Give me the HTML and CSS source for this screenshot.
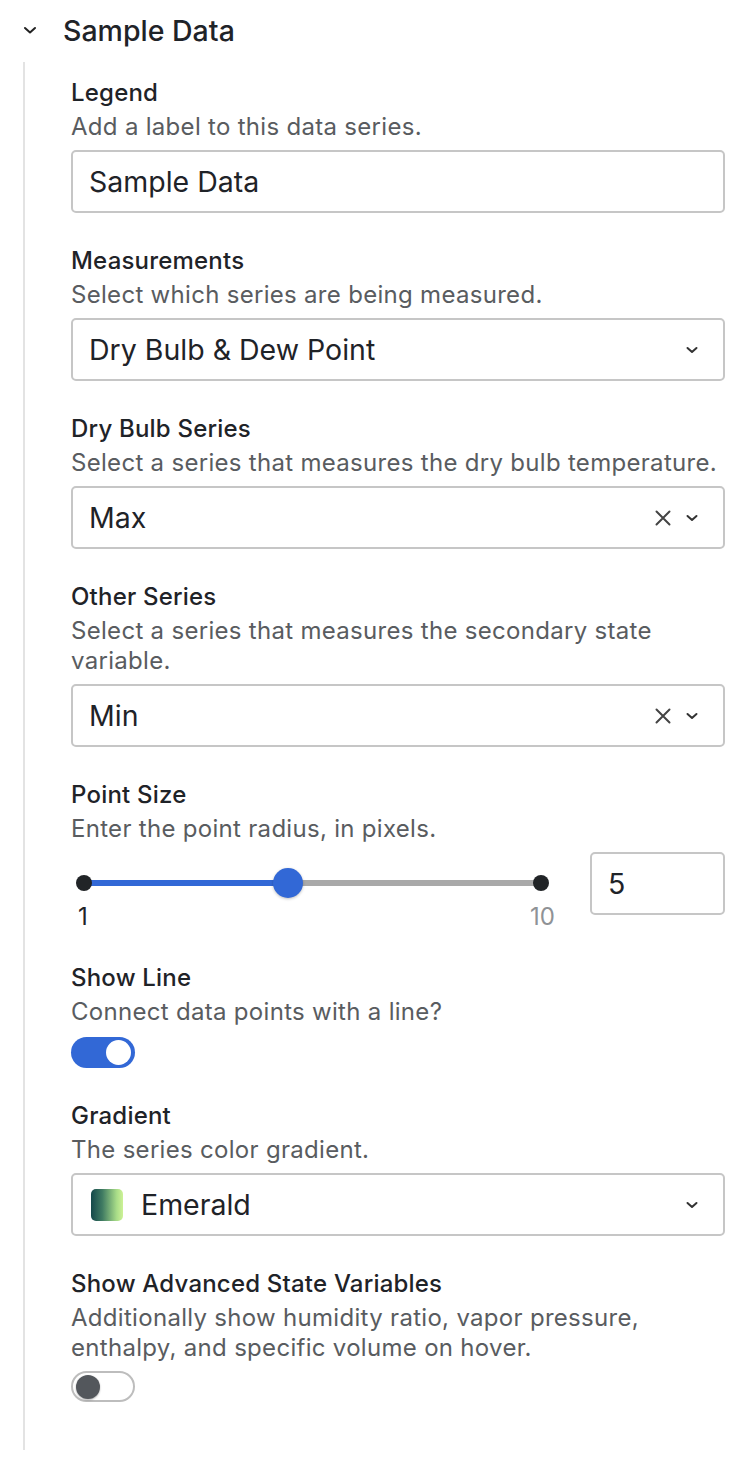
FILE: index.html
```html
<!DOCTYPE html>
<html>
<head>
<meta charset="utf-8">
<link rel="stylesheet" href="styles.css">
</head>
<body>
<div class="panel">
  <div class="header">
    <svg class="chev-head" width="14" height="10" viewBox="0 0 14 10"><path d="M2 3 L7 7.5 L12 3" fill="none" stroke="#222" stroke-width="2" stroke-linecap="round" stroke-linejoin="round"/></svg>
    <span class="title">Sample Data</span>
  </div>
  <div class="body">
    <div class="field">
      <div class="label">Legend</div>
      <div class="desc">Add a label to this data series.</div>
      <div class="input">Sample Data</div>
    </div>
    <div class="field">
      <div class="label">Measurements</div>
      <div class="desc">Select which series are being measured.</div>
      <div class="input select">
        <span class="val">Dry Bulb &amp; Dew Point</span>
        <svg class="chev" width="14" height="10" viewBox="0 0 14 10"><path d="M2.5 3 L7 7 L11.5 3" fill="none" stroke="#333" stroke-width="2" stroke-linecap="round" stroke-linejoin="round"/></svg>
      </div>
    </div>
    <div class="field">
      <div class="label">Dry Bulb Series</div>
      <div class="desc">Select a series that measures the dry bulb temperature.</div>
      <div class="input select">
        <span class="val">Max</span>
        <svg class="x" width="18" height="18" viewBox="0 0 18 18"><path d="M2.5 2.5 L15.5 15.5 M15.5 2.5 L2.5 15.5" fill="none" stroke="#444" stroke-width="2" stroke-linecap="round"/></svg>
        <svg class="chev" width="14" height="10" viewBox="0 0 14 10"><path d="M2.5 3 L7 7 L11.5 3" fill="none" stroke="#333" stroke-width="2" stroke-linecap="round" stroke-linejoin="round"/></svg>
      </div>
    </div>
    <div class="field">
      <div class="label">Other Series</div>
      <div class="desc">Select a series that measures the secondary state variable.</div>
      <div class="input select">
        <span class="val">Min</span>
        <svg class="x" width="18" height="18" viewBox="0 0 18 18"><path d="M2.5 2.5 L15.5 15.5 M15.5 2.5 L2.5 15.5" fill="none" stroke="#444" stroke-width="2" stroke-linecap="round"/></svg>
        <svg class="chev" width="14" height="10" viewBox="0 0 14 10"><path d="M2.5 3 L7 7 L11.5 3" fill="none" stroke="#333" stroke-width="2" stroke-linecap="round" stroke-linejoin="round"/></svg>
      </div>
    </div>
    <div class="field">
      <div class="label">Point Size</div>
      <div class="desc">Enter the point radius, in pixels.</div>
      <div class="slider-row">
        <div class="slider">
          <div class="track">
            <div class="fill" style="width: 44.6%"></div>
            <div class="end end-l"></div>
            <div class="end end-r"></div>
            <div class="thumb" style="left: 44.6%"></div>
          </div>
          <div class="ticks">
            <span class="tick-min">1</span>
            <span class="tick-max">10</span>
          </div>
        </div>
        <div class="input num">5</div>
      </div>
    </div>
    <div class="field">
      <div class="label">Show Line</div>
      <div class="desc">Connect data points with a line?</div>
      <div class="toggle on"><div class="knob"></div></div>
    </div>
    <div class="field">
      <div class="label">Gradient</div>
      <div class="desc">The series color gradient.</div>
      <div class="input select">
        <span class="swatch"></span>
        <span class="val">Emerald</span>
        <svg class="chev" width="14" height="10" viewBox="0 0 14 10"><path d="M2.5 3 L7 7 L11.5 3" fill="none" stroke="#333" stroke-width="2" stroke-linecap="round" stroke-linejoin="round"/></svg>
      </div>
    </div>
    <div class="field">
      <div class="label">Show Advanced State Variables</div>
      <div class="desc">Additionally show humidity ratio, vapor pressure, enthalpy, and specific volume on hover.</div>
      <div class="toggle off"><div class="knob"></div></div>
    </div>
  </div>
</div>
</body>
</html>
```
FILE: styles.css
```css
* { box-sizing: border-box; }
html, body { margin: 0; padding: 0; background: #fff; }
body {
  font-family: Inter, "Noto Sans", "Liberation Sans", sans-serif;
  color: #1f2328;
  width: 742px;
}
.panel { padding: 0 17px 0 0; }
.header {
  height: 62px;
  display: flex;
  align-items: center;
  padding-left: 23px;
  padding-bottom: 2px;
}
.chev-head { margin-right: 26px; }
.title {
  font-size: 28.5px;
  font-weight: 500;
}
.body {
  margin-left: 23px;
  border-left: 2px solid #e3e3e3;
  padding: 16px 0 48px 46px;
  display: flex;
  flex-direction: column;
  gap: 33px;
}
.field { display: flex; flex-direction: column; }
.label {
  font-size: 24px;
  font-weight: 500;
  line-height: 30px;
  letter-spacing: 0.2px;
  color: #1f2328;
}
.desc {
  font-size: 24px;
  line-height: 30px;
  letter-spacing: 0.3px;
  color: #595c60;
  margin-top: 4px;
}
.input {
  margin-top: 8px;
  height: 63px;
  border: 2px solid #c6c6c6;
  border-radius: 5px;
  padding: 0 16px;
  display: flex;
  align-items: center;
  font-size: 28.5px;
  color: #1f2328;
}
.select .val { flex: 1; }
.select .x { margin-right: 13px; }
.select .chev { margin-right: 8px; }
.swatch {
  width: 32px;
  height: 32px;
  border-radius: 5px;
  background: linear-gradient(to right, #14484a, #3f7a62 35%, #a8dc88 80%, #cdf296);
  margin-right: 18px;
  margin-left: 2px;
}
.slider-row {
  margin-top: 8px;
  display: flex;
  align-items: flex-start;
  justify-content: space-between;
}
.slider {
  width: 484px;
  padding: 0 14px 0 13px;
  height: 78px;
}
.track {
  position: relative;
  margin-top: 28px;
  height: 6px;
  background: #a9a9a9;
  border-radius: 3px;
}
.fill {
  position: absolute;
  left: 0; top: 0; bottom: 0;
  background: #3268d6;
}
.end {
  position: absolute;
  top: -5px;
  width: 16px; height: 16px;
  border-radius: 50%;
  background: #212427;
}
.end-l { left: -8px; }
.end-r { right: -8px; }
.thumb {
  position: absolute;
  top: -12px;
  width: 30px; height: 30px;
  margin-left: -15px;
  border-radius: 50%;
  background: #3268d6;
  box-shadow: 0 1px 3px rgba(0,0,0,0.25);
}
.ticks {
  display: flex;
  justify-content: space-between;
  margin-top: 16px;
  font-size: 24px;
  line-height: 30px;
}
.tick-min { margin-left: -6px; color: #1f2328; }
.tick-max { margin-right: -14px; color: #8f9296; }
.num { width: 135px; margin-top: 0; }
.toggle {
  margin-top: 10px;
  width: 64px;
  height: 31px;
  border-radius: 16px;
  position: relative;
}
.toggle.on { background: #3268d6; }
.toggle.on .knob {
  position: absolute;
  right: 4px; top: 3px;
  width: 25px; height: 25px;
  border-radius: 50%;
  background: #fff;
}
.toggle.off { background: #fff; border: 2px solid #bdbdbd; margin-top: 8px; }
.toggle.off .knob {
  position: absolute;
  left: 3px; top: 2px;
  width: 24px; height: 24px;
  border-radius: 50%;
  background: #53575c;
  box-shadow: 0 1px 2px rgba(0,0,0,0.3);
}
```
